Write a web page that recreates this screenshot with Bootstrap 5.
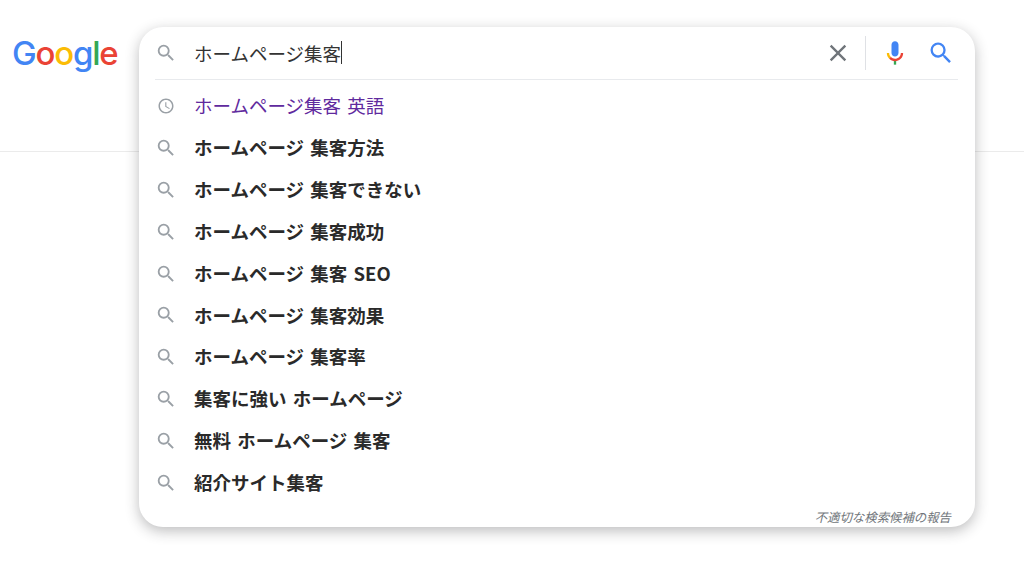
<!DOCTYPE html>
<html lang="ja">
<head>
<meta charset="utf-8">
<title>ホームページ集客</title>
<link href="https://cdn.jsdelivr.net/npm/bootstrap@5.3.0/dist/css/bootstrap.min.css" rel="stylesheet">
<style>
body{background:#fff;font-family:"Noto Sans CJK JP","Liberation Sans",sans-serif;min-height:562px}
.top-strip{height:152px;border-bottom:1px solid #ebebeb;position:relative}
.g-logo{width:139px;padding-top:29px;padding-left:12px;font-family:"Inter",sans-serif;font-size:33px;line-height:48px;letter-spacing:-1.2px;font-weight:500}
.lb{color:#4285f4}.lr{color:#ea4335}.ly{color:#fbbc05}.lg{color:#34a853}
.suggest-panel{position:absolute;left:139px;top:27px;width:836px;height:500px;border-radius:24px;background:#fff;box-shadow:0 4px 14px rgba(32,33,36,.3)}
.query-row{height:53px;margin:0 17px 0 16px;border-bottom:1px solid #e8eaed}
.query-text{font-size:18.5px;color:#333;margin-left:17px;line-height:24px;flex-grow:1;display:flex}
.caret-mark{width:1px;height:23px;background:#333;display:inline-block}
.ico-lead{width:22px;height:22px;fill:#9aa0a6;flex:none}
.ico-clock{width:18px;height:18px;margin:0 2px;fill:#9aa0a6;flex:none}
.sugg-list{padding-top:5px;--bs-list-group-bg:transparent;--bs-list-group-border-width:0}
.sugg-item{height:41.9px;padding:0 16px!important;display:flex;align-items:center;font-size:18.5px;font-weight:700;color:#2a2a2a!important;word-spacing:2px}
.sugg-item span{margin-left:17px}
.sugg-item.visited{font-weight:400;color:#5f2a9e!important}
.act-clear{width:28px;height:28px;fill:#70757a;flex:none;margin-right:-2px}
.act-split{width:1px;height:34px;background:#dfe1e5;margin:0 15px 0 15px;flex:none}
.act-mic{width:28px;height:28px;flex:none}
.act-find{width:28px;height:28px;fill:#4285f4;flex:none;margin:0 3px 0 18px}
.report-note{position:absolute;right:24px;bottom:3px;font-size:12.4px;font-style:italic;color:#70757a;line-height:14px}
</style>
</head>
<body>
<header class="top-strip d-flex">
  <div class="g-logo"><span class="lb">G</span><span class="lr">o</span><span class="ly">o</span><span class="lb">g</span><span class="lg">l</span><span class="lr">e</span></div>
  <div class="suggest-panel">
    <div class="query-row d-flex align-items-center">
      <svg class="ico-lead" viewBox="0 0 24 24"><path d="M15.5 14h-.79l-.28-.27A6.471 6.471 0 0 0 16 9.5 6.5 6.5 0 1 0 9.5 16c1.61 0 3.09-.59 4.23-1.57l.27.28v.79l5 4.99L20.49 19l-4.99-5zm-6 0C7.01 14 5 11.99 5 9.5S7.01 5 9.5 5 14 7.01 14 9.5 11.99 14 9.5 14z"/></svg>
      <div class="query-text"><span>ホームページ集客</span><i class="caret-mark"></i></div>
      <svg class="act-clear" viewBox="0 0 24 24"><path d="M19 6.41L17.59 5 12 10.59 6.41 5 5 6.41 10.59 12 5 17.59 6.41 19 12 13.41 17.59 19 19 17.59 13.41 12 19 6.41z"/></svg>
      <div class="act-split"></div>
      <svg class="act-mic" viewBox="0 0 24 24"><path fill="#4285f4" d="m12 15c1.66 0 3-1.31 3-2.97v-7.02c0-1.66-1.34-3.01-3-3.01s-3 1.34-3 3.01v7.02c0 1.66 1.34 2.97 3 2.97z"/><path fill="#34a853" d="m11 18.08h2v3.92h-2z"/><path fill="#fbbc05" d="m7.05 16.87c-1.27-1.33-2.05-2.83-2.05-4.87h2c0 1.45 0.56 2.42 1.47 3.38v0.32l-1.15 1.18z"/><path fill="#ea4335" d="m12 16.93a4.97 5.25 0 0 1 -3.54 -1.55l-1.41 1.49c1.26 1.34 3.02 2.13 4.95 2.13 3.87 0 6.99-2.92 6.99-6.99h-1.99c0 2.92-2.24 4.93-5 4.93z"/></svg>
      <svg class="act-find" viewBox="0 0 24 24"><path d="M15.5 14h-.79l-.28-.27A6.471 6.471 0 0 0 16 9.5 6.5 6.5 0 1 0 9.5 16c1.61 0 3.09-.59 4.23-1.57l.27.28v.79l5 4.99L20.49 19l-4.99-5zm-6 0C7.01 14 5 11.99 5 9.5S7.01 5 9.5 5 14 7.01 14 9.5 11.99 14 9.5 14z"/></svg>
    </div>
    <div class="list-group list-group-flush sugg-list">
      <div class="list-group-item sugg-item visited"><svg class="ico-clock" viewBox="0 0 24 24"><path d="M11.99 2C6.47 2 2 6.48 2 12s4.47 10 9.99 10C17.52 22 22 17.52 22 12S17.52 2 11.99 2zM12 20c-4.42 0-8-3.58-8-8s3.58-8 8-8 8 3.58 8 8-3.58 8-8 8z"/><path d="M12.5 7H11v6l5.25 3.15.75-1.23-4.5-2.67z"/></svg><span>ホームページ集客 英語</span></div>
      <div class="list-group-item sugg-item"><svg class="ico-lead" viewBox="0 0 24 24"><path d="M15.5 14h-.79l-.28-.27A6.471 6.471 0 0 0 16 9.5 6.5 6.5 0 1 0 9.5 16c1.61 0 3.09-.59 4.23-1.57l.27.28v.79l5 4.99L20.49 19l-4.99-5zm-6 0C7.01 14 5 11.99 5 9.5S7.01 5 9.5 5 14 7.01 14 9.5 11.99 14 9.5 14z"/></svg><span>ホームページ 集客方法</span></div>
      <div class="list-group-item sugg-item"><svg class="ico-lead" viewBox="0 0 24 24"><path d="M15.5 14h-.79l-.28-.27A6.471 6.471 0 0 0 16 9.5 6.5 6.5 0 1 0 9.5 16c1.61 0 3.09-.59 4.23-1.57l.27.28v.79l5 4.99L20.49 19l-4.99-5zm-6 0C7.01 14 5 11.99 5 9.5S7.01 5 9.5 5 14 7.01 14 9.5 11.99 14 9.5 14z"/></svg><span>ホームページ 集客できない</span></div>
      <div class="list-group-item sugg-item"><svg class="ico-lead" viewBox="0 0 24 24"><path d="M15.5 14h-.79l-.28-.27A6.471 6.471 0 0 0 16 9.5 6.5 6.5 0 1 0 9.5 16c1.61 0 3.09-.59 4.23-1.57l.27.28v.79l5 4.99L20.49 19l-4.99-5zm-6 0C7.01 14 5 11.99 5 9.5S7.01 5 9.5 5 14 7.01 14 9.5 11.99 14 9.5 14z"/></svg><span>ホームページ 集客成功</span></div>
      <div class="list-group-item sugg-item"><svg class="ico-lead" viewBox="0 0 24 24"><path d="M15.5 14h-.79l-.28-.27A6.471 6.471 0 0 0 16 9.5 6.5 6.5 0 1 0 9.5 16c1.61 0 3.09-.59 4.23-1.57l.27.28v.79l5 4.99L20.49 19l-4.99-5zm-6 0C7.01 14 5 11.99 5 9.5S7.01 5 9.5 5 14 7.01 14 9.5 11.99 14 9.5 14z"/></svg><span>ホームページ 集客 SEO</span></div>
      <div class="list-group-item sugg-item"><svg class="ico-lead" viewBox="0 0 24 24"><path d="M15.5 14h-.79l-.28-.27A6.471 6.471 0 0 0 16 9.5 6.5 6.5 0 1 0 9.5 16c1.61 0 3.09-.59 4.23-1.57l.27.28v.79l5 4.99L20.49 19l-4.99-5zm-6 0C7.01 14 5 11.99 5 9.5S7.01 5 9.5 5 14 7.01 14 9.5 11.99 14 9.5 14z"/></svg><span>ホームページ 集客効果</span></div>
      <div class="list-group-item sugg-item"><svg class="ico-lead" viewBox="0 0 24 24"><path d="M15.5 14h-.79l-.28-.27A6.471 6.471 0 0 0 16 9.5 6.5 6.5 0 1 0 9.5 16c1.61 0 3.09-.59 4.23-1.57l.27.28v.79l5 4.99L20.49 19l-4.99-5zm-6 0C7.01 14 5 11.99 5 9.5S7.01 5 9.5 5 14 7.01 14 9.5 11.99 14 9.5 14z"/></svg><span>ホームページ 集客率</span></div>
      <div class="list-group-item sugg-item"><svg class="ico-lead" viewBox="0 0 24 24"><path d="M15.5 14h-.79l-.28-.27A6.471 6.471 0 0 0 16 9.5 6.5 6.5 0 1 0 9.5 16c1.61 0 3.09-.59 4.23-1.57l.27.28v.79l5 4.99L20.49 19l-4.99-5zm-6 0C7.01 14 5 11.99 5 9.5S7.01 5 9.5 5 14 7.01 14 9.5 11.99 14 9.5 14z"/></svg><span>集客に強い ホームページ</span></div>
      <div class="list-group-item sugg-item"><svg class="ico-lead" viewBox="0 0 24 24"><path d="M15.5 14h-.79l-.28-.27A6.471 6.471 0 0 0 16 9.5 6.5 6.5 0 1 0 9.5 16c1.61 0 3.09-.59 4.23-1.57l.27.28v.79l5 4.99L20.49 19l-4.99-5zm-6 0C7.01 14 5 11.99 5 9.5S7.01 5 9.5 5 14 7.01 14 9.5 11.99 14 9.5 14z"/></svg><span>無料 ホームページ 集客</span></div>
      <div class="list-group-item sugg-item"><svg class="ico-lead" viewBox="0 0 24 24"><path d="M15.5 14h-.79l-.28-.27A6.471 6.471 0 0 0 16 9.5 6.5 6.5 0 1 0 9.5 16c1.61 0 3.09-.59 4.23-1.57l.27.28v.79l5 4.99L20.49 19l-4.99-5zm-6 0C7.01 14 5 11.99 5 9.5S7.01 5 9.5 5 14 7.01 14 9.5 11.99 14 9.5 14z"/></svg><span>紹介サイト集客</span></div>
    </div>
    <div class="report-note">不適切な検索候補の報告</div>
  </div>
</header>
<script src="https://cdn.jsdelivr.net/npm/bootstrap@5.3.0/dist/js/bootstrap.bundle.min.js"></script>
</body>
</html>
